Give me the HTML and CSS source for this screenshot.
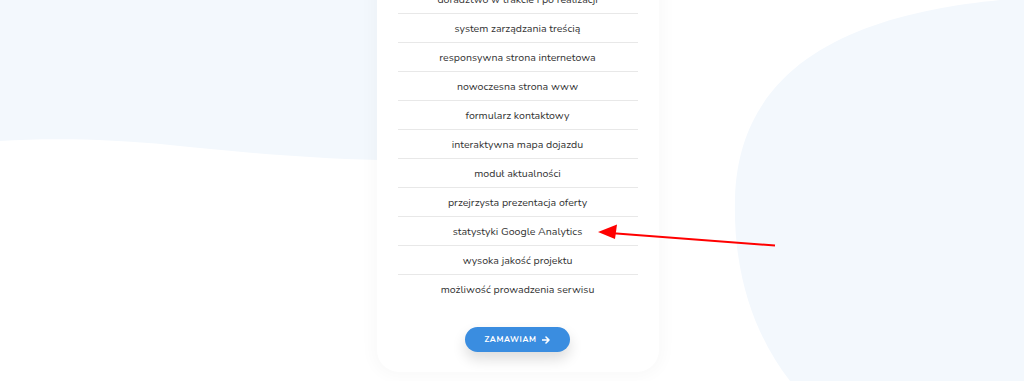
FILE: index.html
```html
<!DOCTYPE html>
<html lang="pl">
<head>
<meta charset="utf-8">
<link rel="stylesheet" href="styles.css">
</head>
<body>
<div class="page">
  <svg class="bg" width="1024" height="381" viewBox="0 0 1024 381" aria-hidden="true">
    <path d="M0,0 H380 V160 C300,158 240,152 170,145 C110,139 50,138 0,141 Z" fill="#f3f8fd"/>
    <path d="M1024,0 H1000 C880,12 738,50 735,200 C733,280 758,340 790,381 H1024 Z" fill="#f3f8fd"/>
  </svg>
  <div class="wrap">
    <div class="card">
      <ul class="features">
        <li>doradztwo w trakcie i po realizacji</li>
        <li>system zarządzania treścią</li>
        <li>responsywna strona internetowa</li>
        <li>nowoczesna strona www</li>
        <li>formularz kontaktowy</li>
        <li>interaktywna mapa dojazdu</li>
        <li>moduł aktualności</li>
        <li>przejrzysta prezentacja oferty</li>
        <li>statystyki Google Analytics</li>
        <li>wysoka jakość projektu</li>
        <li>możliwość prowadzenia serwisu</li>
      </ul>
      <a class="btn" href="#">ZAMAWIAM
        <svg class="btn-arrow" width="8" height="8" viewBox="0 0 8 8"><path d="M0.5,4 H7 M4,1 L7,4 L4,7" fill="none" stroke="#fff" stroke-width="1.6" stroke-linecap="round" stroke-linejoin="round"/></svg>
      </a>
    </div>
  </div>
  <svg class="annot" width="1024" height="381" viewBox="0 0 1024 381" aria-hidden="true">
    <line x1="775" y1="245.5" x2="610" y2="233" stroke="#f00" stroke-width="2"/>
    <polygon points="598,232 617,224.5 615,239" fill="#f00"/>
  </svg>
</div>
</body>
</html>
```
FILE: styles.css
```css
html, body {
  margin: 0;
  padding: 0;
  background: #fff;
  overflow: hidden;
}
.page {
  position: relative;
  width: 1024px;
  height: 381px;
  overflow: hidden;
  font-family: "Nunito", "Noto Sans", "Open Sans", sans-serif;
}
.bg, .annot {
  position: absolute;
  left: 0;
  top: 0;
}
.bg { z-index: 0; }
.annot { z-index: 2; pointer-events: none; }
.wrap {
  position: relative;
  z-index: 1;
  display: flex;
  justify-content: center;
  padding-left: 11px;
}
.card {
  width: 240px;
  margin-top: -20px;
  padding: 0 21px 20px;
  background: #fff;
  border-radius: 0 0 22px 22px;
  box-shadow: 0 0 14px 6px rgba(0, 0, 0, 0.025);
  display: flex;
  flex-direction: column;
  align-items: center;
}
.features {
  list-style: none;
  margin: 0;
  padding: 0;
  width: 100%;
}
.features li {
  height: 28px;
  line-height: 29px;
  border-bottom: 1px solid #e8e8e8;
  text-align: center;
  font-size: 10.6px;
  color: #333;
  white-space: nowrap;
}
.features li:first-child { height: 33px; line-height: 40px; }
.features li:last-child { border-bottom: none; }
.btn {
  margin-top: 24px;
  width: 105px;
  height: 25px;
  border-radius: 13px;
  background: #3a8de0;
  color: #fff;
  text-decoration: none;
  font-size: 8px;
  font-weight: 700;
  letter-spacing: 0.6px;
  display: flex;
  align-items: center;
  justify-content: center;
  gap: 6px;
  box-shadow: 0 7px 14px rgba(0, 0, 0, 0.14);
}
.btn-arrow { display: block; }
```
